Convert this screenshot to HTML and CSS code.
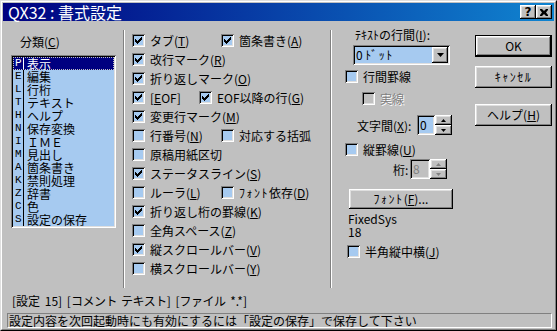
FILE: index.html
```html
<!DOCTYPE html>
<html lang="ja">
<head>
    <meta charset="UTF-8">
    <title>QX32 : 書式設定</title>
    <link rel="stylesheet" href="styles.css">
</head>
<body>
    <div class="window">
        <div class="window-inner">
            <div class="titlebar">
                <span class="title">QX32 : 書式設定</span>
                <span class="tbtn help">?</span>
                <span class="tbtn close">
                    <svg width="8" height="7" viewBox="0 0 8 7"><path d="M0 0h2l2 2 2-2h2v1L6 3.5 8 6v1H6L4 5 2 7H0V6l2-2.5L0 1z" fill="#000"/></svg>
                </span>
            </div>

            <div class="main">
                <!-- 分類 -->
                <div class="cat">
                    <div class="cat-label">分類(<u>C</u>)</div>
                    <div class="list">
                        <div class="item sel"><span class="k">P</span><span class="t">表示</span></div>
                        <div class="item"><span class="k">E</span><span class="t">編集</span></div>
                        <div class="item"><span class="k">L</span><span class="t">行桁</span></div>
                        <div class="item"><span class="k">T</span><span class="t">テキスト</span></div>
                        <div class="item"><span class="k">H</span><span class="t">ヘルプ</span></div>
                        <div class="item"><span class="k">N</span><span class="t">保存変換</span></div>
                        <div class="item"><span class="k">I</span><span class="t">ＩＭＥ</span></div>
                        <div class="item"><span class="k">M</span><span class="t">見出し</span></div>
                        <div class="item"><span class="k">A</span><span class="t">箇条書き</span></div>
                        <div class="item"><span class="k">K</span><span class="t">禁則処理</span></div>
                        <div class="item"><span class="k">Z</span><span class="t">辞書</span></div>
                        <div class="item"><span class="k">C</span><span class="t">色</span></div>
                        <div class="item"><span class="k">S</span><span class="t">設定の保存</span></div>
                    </div>
                </div>

                <div class="sep"></div>

                <!-- 表示項目 -->
                <div class="opts">
                    <div class="pair">
                        <label class="cb on"><span class="box"></span>タブ(<u>T</u>)</label>
                        <label class="cb on"><span class="box"></span>箇条書き(<u>A</u>)</label>
                    </div>
                    <label class="cb on"><span class="box"></span>改行マーク(<u>R</u>)</label>
                    <label class="cb on"><span class="box"></span>折り返しマーク(<u>O</u>)</label>
                    <div class="pair eof">
                        <label class="cb on"><span class="box"></span>[<u>E</u>OF]</label>
                        <label class="cb on"><span class="box"></span>EOF以降の行(<u>G</u>)</label>
                    </div>
                    <label class="cb on"><span class="box"></span>変更行マーク(<u>M</u>)</label>
                    <div class="pair">
                        <label class="cb"><span class="box"></span>行番号(<u>N</u>)</label>
                        <label class="cb"><span class="box"></span>対応する括弧</label>
                    </div>
                    <label class="cb"><span class="box"></span>原稿用紙区切</label>
                    <label class="cb on"><span class="box"></span>ステータスライン(<u>S</u>)</label>
                    <div class="pair">
                        <label class="cb"><span class="box"></span>ルーラ(<u>L</u>)</label>
                        <label class="cb"><span class="box"></span><span class="hk">ﾌｫﾝﾄ</span>依存(<u>D</u>)</label>
                    </div>
                    <label class="cb on"><span class="box"></span>折り返し桁の罫線(<u>K</u>)</label>
                    <label class="cb"><span class="box"></span>全角スペース(<u>Z</u>)</label>
                    <label class="cb on"><span class="box"></span>縦スクロールバー(<u>V</u>)</label>
                    <label class="cb"><span class="box"></span>横スクロールバー(<u>Y</u>)</label>
                </div>

                <div class="sep"></div>

                <!-- 行間・フォント -->
                <div class="fmt">
                    <div class="fmt-label">ﾃｷｽﾄの行間(<u>I</u>):</div>
                    <div class="combo">
                        <span class="combo-text">0 <span class="hk">ﾄﾞｯﾄ</span></span>
                        <span class="drop">
                            <svg width="7" height="4" viewBox="0 0 7 4"><path d="M0 0h7L3.5 4z" fill="#000"/></svg>
                        </span>
                    </div>
                    <label class="cb line-rule"><span class="box"></span>行間罫線</label>
                    <label class="cb solid disabled"><span class="box"></span>実線</label>
                    <div class="spin-row char-gap">
                        <span class="spin-label">文字間(<u>X</u>):</span>
                        <span class="field">0</span>
                        <span class="spin">
                            <span class="sbtn"><svg width="5" height="3" viewBox="0 0 5 3"><path d="M2.5 0L5 3H0z" fill="#000"/></svg></span>
                            <span class="sbtn"><svg width="5" height="3" viewBox="0 0 5 3"><path d="M0 0h5L2.5 3z" fill="#000"/></svg></span>
                        </span>
                    </div>
                    <label class="cb vrule"><span class="box"></span>縦罫線(<u>U</u>)</label>
                    <div class="spin-row col disabled">
                        <span class="spin-label">桁:</span>
                        <span class="field">8</span>
                        <span class="spin">
                            <span class="sbtn"><svg width="5" height="3" viewBox="0 0 5 3"><path d="M2.5 0L5 3H0z" fill="#808080"/></svg></span>
                            <span class="sbtn"><svg width="5" height="3" viewBox="0 0 5 3"><path d="M0 0h5L2.5 3z" fill="#808080"/></svg></span>
                        </span>
                    </div>
                    <div class="btn font-btn"><span class="hk">ﾌｫﾝﾄ</span>(<u>F</u>)...</div>
                    <div class="font-name">FixedSys</div>
                    <div class="font-name">18</div>
                    <label class="cb tcy"><span class="box"></span>半角縦中横(<u>J</u>)</label>
                </div>

                <!-- ボタン -->
                <div class="btns">
                    <div class="btn default">OK</div>
                    <div class="btn cancel"><span class="hk">ｷｬﾝｾﾙ</span></div>
                    <div class="btn help-btn">ヘルプ(<u>H</u>)</div>
                </div>
            </div>

            <div class="status">[設定 15] [<span class="kn">コメント テキスト</span>] [<span class="kn">ファイル</span> *.*]</div>
            <div class="hint">設定内容を次回起動時にも有効にするには「設定の保存」で保存して下さい</div>
        </div>
    </div>
</body>
</html>
```

FILE: styles.css
```css
* {
    margin: 0;
    padding: 0;
    box-sizing: border-box;
}
body {
    background: #c0c0c0;
    font-family: "Noto Sans CJK JP", "Liberation Sans", sans-serif;
    font-size: 12px;
    color: #000;
}
u {
    text-underline-offset: 1px;
}
/* 半角カナ */
.hk {
    letter-spacing: 1.5px;
}
/* 詰めた全角カナ */
.kn {
    letter-spacing: -0.5px;
}
.window {
    width: 557px;
    height: 331px;
    border: 1px solid;
    border-color: #dfdfdf #000 #000 #dfdfdf;
}
.window-inner {
    height: 100%;
    border: 1px solid;
    border-color: #fff #808080 #808080 #fff;
    padding: 1px;
    display: flex;
    flex-direction: column;
}

/* タイトルバー */
.titlebar {
    height: 18px;
    flex: none;
    background: linear-gradient(to right, #000080, #1084d0);
    display: flex;
    align-items: center;
    padding: 0 2px 0 5px;
    color: #fff;
}
.title {
    flex: 1;
    font-size: 16px;
    line-height: 18px;
}
.tbtn {
    width: 16px;
    height: 14px;
    background: #c0c0c0;
    box-shadow: inset -1px -1px #000, inset 1px 1px #fff, inset -2px -2px #808080, inset 2px 2px #dfdfdf;
    display: flex;
    align-items: center;
    justify-content: center;
    color: #000;
    font: bold 12px "DejaVu Sans", sans-serif;
    line-height: 14px;
}
.tbtn.close svg {
    margin-left: -1px;
}

/* 共通の立体表現 */
.btn {
    height: 22px;
    background: #c0c0c0;
    box-shadow: inset -1px -1px #000, inset 1px 1px #fff, inset -2px -2px #808080, inset 2px 2px #dfdfdf;
    display: flex;
    align-items: center;
    justify-content: center;
    line-height: 14px;
}
.box,
.list,
.combo,
.field {
    box-shadow: inset 1px 1px #808080, inset -1px -1px #fff, inset 2px 2px #000, inset -2px -2px #dfdfdf;
}

.main {
    height: 273px;
    flex: none;
    display: flex;
}

/* 分類リスト */
.cat {
    width: 105px;
    margin-left: 8px;
    padding-top: 14px;
}
.cat-label {
    margin-left: 9px;
    height: 13px;
    line-height: 13px;
    margin-bottom: 7px;
}
.list {
    height: 173px;
    background: #a6caf0;
    padding: 2px;
}
.item {
    height: 13px;
    line-height: 13px;
    display: flex;
}
.item .k {
    width: 10px;
    padding-left: 2px;
    font-family: "Liberation Mono", monospace;
    font-size: 11px;
}
.item .t {
    flex: 1;
    border-left: 1px solid currentColor;
    padding-left: 3px;
}
.item.sel {
    background: #000080;
    color: #fff;
    outline: 1px dotted #c0c0c0;
    outline-offset: -1px;
}

.sep {
    width: 2px;
    height: 258px;
    margin: 9px 0 0 7px;
    border-left: 1px solid #808080;
    border-right: 1px solid #fff;
}

/* チェックボックス */
.cb {
    display: flex;
    align-items: center;
    height: 19px;
    white-space: nowrap;
}
.box {
    width: 13px;
    height: 13px;
    flex: none;
    background: #a6caf0;
    margin-right: 5px;
    position: relative;
}
.cb.on .box::after {
    content: "";
    position: absolute;
    left: 3px;
    top: 3px;
    width: 7px;
    height: 7px;
    background: url("data:image/svg+xml,%3Csvg xmlns='http://www.w3.org/2000/svg' width='7' height='7' shape-rendering='crispEdges'%3E%3Cpath d='M0 2H1V3H2V4H3V3H4V2H5V1H6V0H7V3H6V4H5V5H4V6H3V7H2V6H1V5H0Z'/%3E%3C/svg%3E");
}
.cb.disabled {
    color: #808080;
    text-shadow: 1px 1px #fff;
}
.cb.disabled .box {
    background: #c0c0c0;
}

.opts {
    width: 191px;
    margin-left: 7px;
    padding-top: 10px;
}
.pair {
    display: flex;
}
.pair .cb:first-child {
    width: 89px;
}
.pair.eof .cb:first-child {
    width: 67px;
}

/* 行間・フォント */
.fmt {
    width: 108px;
    margin-left: 13px;
    display: flex;
    flex-direction: column;
}
.fmt-label {
    margin: 7px 0 0 10px;
    height: 13px;
    line-height: 13px;
}
.combo {
    width: 97px;
    height: 20px;
    margin: 4px 0 0 8px;
    background: #a6caf0;
    padding: 2px;
    display: flex;
    align-items: center;
}
.combo-text {
    flex: 1;
    padding-left: 1px;
    line-height: 14px;
}
.drop {
    width: 16px;
    height: 16px;
    background: #c0c0c0;
    box-shadow: inset -1px -1px #000, inset 1px 1px #fff, inset -2px -2px #808080, inset 2px 2px #dfdfdf;
    display: flex;
    align-items: center;
    justify-content: center;
}
.line-rule {
    margin-top: 2px;
}
.solid {
    margin: 3px 0 0 17px;
}
.spin-row {
    display: flex;
    height: 20px;
    align-items: center;
}
.char-gap {
    margin: 7px 0 0 12px;
}
.col {
    margin-left: 48px;
}
.char-gap .spin-label {
    width: 60px;
}
.col .spin-label {
    width: 17px;
}
.field {
    width: 18px;
    height: 20px;
    background: #a6caf0;
    padding: 2px 0 0 3px;
    line-height: 16px;
}
.col .field {
    width: 20px;
    background: #c0c0c0;
    color: #808080;
}
.spin {
    width: 17px;
    height: 20px;
    display: flex;
    flex-direction: column;
}
.sbtn {
    flex: 1;
    background: #c0c0c0;
    box-shadow: inset -1px -1px #000, inset 1px 1px #fff, inset -2px -2px #808080, inset 2px 2px #dfdfdf;
    display: flex;
    align-items: center;
    justify-content: center;
}
.vrule {
    margin-top: 5px;
}
.font-btn {
    width: 104px;
    height: 20px;
    margin: 10px 0 0 4px;
}
.font-name {
    margin-left: 3px;
    height: 13px;
    line-height: 13px;
}
.font-btn + .font-name {
    margin-top: 3px;
}
.tcy {
    margin: 4px 0 0 2px;
}

/* ボタン列 */
.btns {
    width: 77px;
    margin-left: 22px;
    padding-top: 14px;
}
.btn.default {
    border: 1px solid #000;
}
.cancel {
    margin-top: 9px;
}
.help-btn {
    margin-top: 16px;
}

/* 下部 */
.status {
    height: 14px;
    line-height: 14px;
    margin-left: 9px;
    flex: none;
    word-spacing: 2px;
}
.hint {
    height: 15px;
    margin: 5px 2px 0 4px;
    border: 1px solid;
    border-color: #808080 #fff #fff #808080;
    padding-left: 1px;
    line-height: 13px;
    white-space: nowrap;
    overflow: hidden;
}
```
